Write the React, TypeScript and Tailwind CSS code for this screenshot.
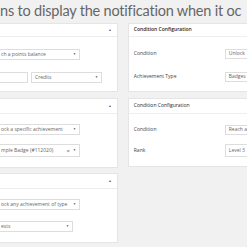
import React from "react";

function Arrow() {
  return <span className="text-[3px] leading-none text-[#444]">▼</span>;
}

function Select({
  text,
  w,
  h = "h-[11px]",
  cut = false,
  clear = false,
}: {
  text: string;
  w: string;
  h?: string;
  cut?: boolean;
  clear?: boolean;
}) {
  return (
    <div
      className={`${w} ${h} flex items-center justify-between bg-white border border-[#dddddd] ${
        cut ? "border-l-0 pl-[1px]" : "pl-[3px]"
      } pr-[3px] text-[5px] text-[#666] whitespace-nowrap overflow-hidden`}
    >
      <span>{text}</span>
      <span className="flex items-center gap-[3px]">
        {clear && <span className="text-[6px] leading-none text-[#555]">×</span>}
        <Arrow />
      </span>
    </div>
  );
}

function LeftCard({
  header,
  children,
  className,
}: {
  header: string;
  children: React.ReactNode;
  className: string;
}) {
  return (
    <div className={`bg-white border border-l-0 border-[#e5e5e5] ${className}`}>
      <div
        className={`${header} flex items-center justify-end pr-[5px] border-b border-[#eeeeee]`}
      >
        <span className="text-[3.5px] leading-none text-[#666]">▲</span>
      </div>
      {children}
    </div>
  );
}

function Row({ label, value, y }: { label: string; value: string; y: string }) {
  return (
    <div className={`flex items-center ${y}`}>
      <span className="w-[91px] text-[5px] text-[#444]">{label}</span>
      <div className="flex-1 h-full flex items-center bg-white border border-r-0 border-[#dddddd] pl-[3px] text-[5px] text-[#666] whitespace-nowrap">
        {value}
      </div>
    </div>
  );
}

export default function App() {
  return (
    <div className="w-[247px] h-[247px] overflow-hidden bg-[#f1f1f1] font-['Open_Sans',sans-serif]">
      <div className="h-[23px] pt-[1px] whitespace-nowrap overflow-hidden font-['Lato',sans-serif] text-[14.5px] leading-[20px] text-[#666] tracking-[-0.2px]">
        ns to display the notification when it oc
      </div>
      <div className="flex gap-[10px]">
        <div className="w-[118px] flex flex-col">
          <LeftCard header="h-[13px]" className="h-[69px]">
            <div className="pt-[12px] flex flex-col gap-[12px]">
              <Select text="ch a points balance" w="w-[80px]" cut />
              <div className="flex gap-[3px]">
                <div className="w-[28px] h-[11px] bg-white border border-l-0 border-[#dddddd]" />
                <Select text="Credits" w="w-[71px]" />
              </div>
            </div>
          </LeftCard>
          <LeftCard header="h-[15px]" className="mt-[6px] h-[70px]">
            <div className="pt-[10px] flex flex-col gap-[9px]">
              <Select text="ock a specific achievement" w="w-[80px]" cut />
              <Select
                text="mple Badge (#112020)"
                w="w-[80px]"
                h="h-[13px]"
                cut
                clear
              />
            </div>
          </LeftCard>
          <LeftCard header="h-[15px]" className="mt-[5px] h-[70px]">
            <div className="pt-[10px] flex flex-col gap-[11px]">
              <Select text="ock any achievement of type" w="w-[80px]" cut />
              <Select text="ests" w="w-[73px]" cut />
            </div>
          </LeftCard>
        </div>
        <div className="flex-1 flex flex-col">
          <div className="h-[69px] bg-white border border-r-0 border-[#e5e5e5]">
            <div className="h-[13px] flex items-center pl-[5px] border-b border-[#eeeeee] text-[5px] font-semibold text-[#23282d]">
              Condition Configuration
            </div>
            <div className="pl-[5px] pt-[12px] flex flex-col gap-[13px]">
              <Row label="Condition" value="Unlock" y="h-[10px]" />
              <Row label="Achievement Type" value="Badges" y="h-[10px]" />
            </div>
          </div>
          <div className="mt-[6px] h-[69px] bg-white border border-r-0 border-[#e5e5e5]">
            <div className="h-[15px] flex items-center pl-[5px] border-b border-[#eeeeee] text-[5px] text-[#23282d]">
              Condition Configuration
            </div>
            <div className="pl-[5px] pt-[11px] flex flex-col gap-[9px]">
              <Row label="Condition" value="Reach a" y="h-[10px]" />
              <Row label="Rank" value="Level 3" y="h-[13px]" />
            </div>
          </div>
        </div>
      </div>
    </div>
  );
}
